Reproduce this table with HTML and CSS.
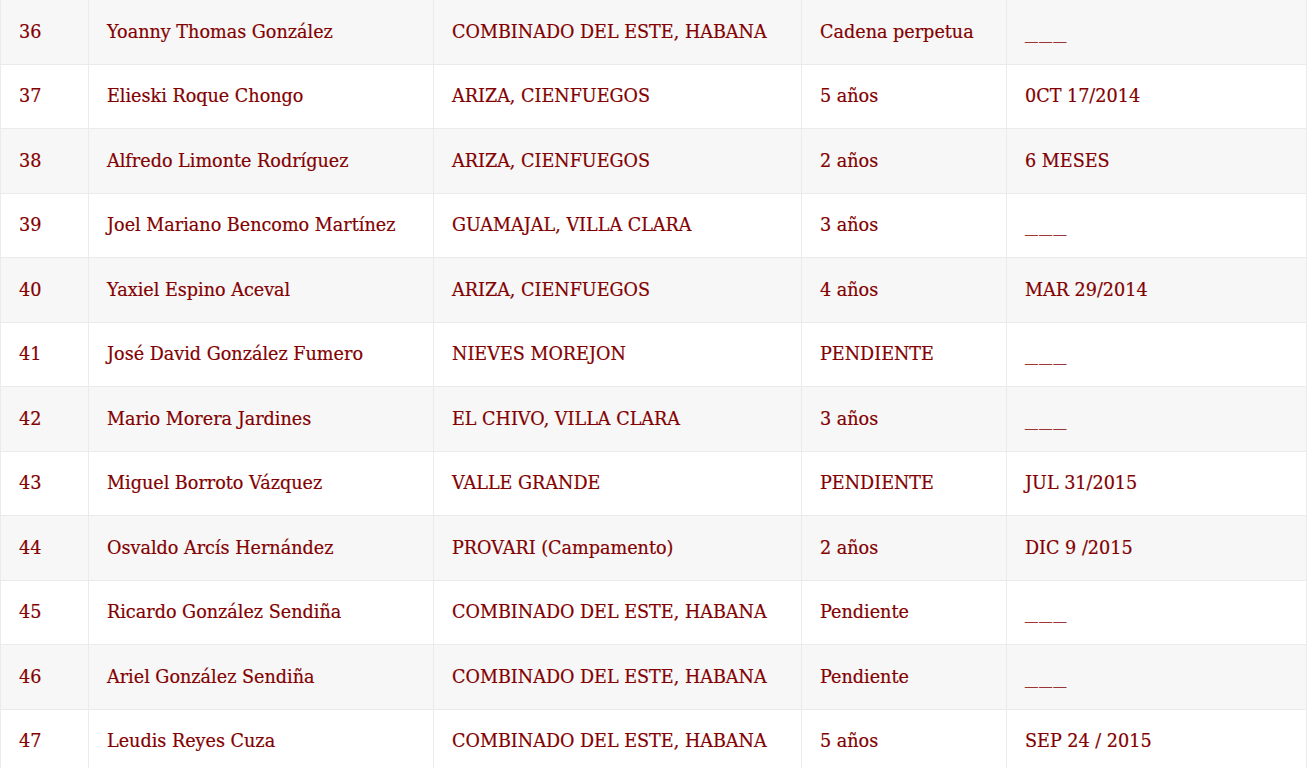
FILE: index.html
```html
<!DOCTYPE html>
<html lang="es">
<head>
<meta charset="utf-8">
<title>Lista</title>
<link rel="stylesheet" href="styles.css">
</head>
<body>
<table class="list">
  <colgroup>
    <col class="c-num"><col class="c-name"><col class="c-place"><col class="c-term"><col class="c-date">
  </colgroup>
  <tbody>
    <tr><td>36</td><td>Yoanny Thomas González</td><td>COMBINADO DEL ESTE, HABANA</td><td>Cadena perpetua</td><td><span class="dash">___</span></td></tr>
    <tr><td>37</td><td>Elieski Roque Chongo</td><td>ARIZA, CIENFUEGOS</td><td>5 años</td><td>0CT 17/2014</td></tr>
    <tr><td>38</td><td>Alfredo Limonte Rodríguez</td><td>ARIZA, CIENFUEGOS</td><td>2 años</td><td>6 MESES</td></tr>
    <tr><td>39</td><td>Joel Mariano Bencomo Martínez</td><td>GUAMAJAL, VILLA CLARA</td><td>3 años</td><td><span class="dash">___</span></td></tr>
    <tr><td>40</td><td>Yaxiel Espino Aceval</td><td>ARIZA, CIENFUEGOS</td><td>4 años</td><td>MAR 29/2014</td></tr>
    <tr><td>41</td><td>José David González Fumero</td><td>NIEVES MOREJON</td><td>PENDIENTE</td><td><span class="dash">___</span></td></tr>
    <tr><td>42</td><td>Mario Morera Jardines</td><td>EL CHIVO, VILLA CLARA</td><td>3 años</td><td><span class="dash">___</span></td></tr>
    <tr><td>43</td><td>Miguel Borroto Vázquez</td><td>VALLE GRANDE</td><td>PENDIENTE</td><td>JUL 31/2015</td></tr>
    <tr><td>44</td><td>Osvaldo Arcís Hernández</td><td>PROVARI (Campamento)</td><td>2 años</td><td>DIC 9 /2015</td></tr>
    <tr><td>45</td><td>Ricardo González Sendiña</td><td>COMBINADO DEL ESTE, HABANA</td><td>Pendiente</td><td><span class="dash">___</span></td></tr>
    <tr><td>46</td><td>Ariel González Sendiña</td><td>COMBINADO DEL ESTE, HABANA</td><td>Pendiente</td><td><span class="dash">___</span></td></tr>
    <tr><td>47</td><td>Leudis Reyes Cuza</td><td>COMBINADO DEL ESTE, HABANA</td><td>5 años</td><td>SEP 24 / 2015</td></tr>
  </tbody>
</table>
</body>
</html>
```

FILE: styles.css
```css
html, body {
  margin: 0;
  padding: 0;
  background: #ffffff;
}

body {
  font-family: "DejaVu Serif", "Liberation Serif", serif;
  font-size: 17.6px;
  color: #830000;
}

.list {
  border-collapse: collapse;
  width: 1306px;
  table-layout: fixed;
  margin-top: -1px;
}

.c-num { width: 88px; }
.c-name { width: 345px; }
.c-place { width: 368px; }
.c-term { width: 205px; }
.c-date { width: 300px; }

.list td {
  border: 1px solid #ebebeb;
  padding: 0 18px;
  height: 63.5px;
  line-height: 24px;
  vertical-align: middle;
  white-space: nowrap;
  overflow: hidden;
  -webkit-text-stroke: 0.2px #830000;
}

.list tr:nth-child(odd) td {
  background: #f7f7f7;
}

.dash {
  display: inline-block;
  letter-spacing: 1px;
  transform: scaleX(1.45);
  transform-origin: left center;
}
```
